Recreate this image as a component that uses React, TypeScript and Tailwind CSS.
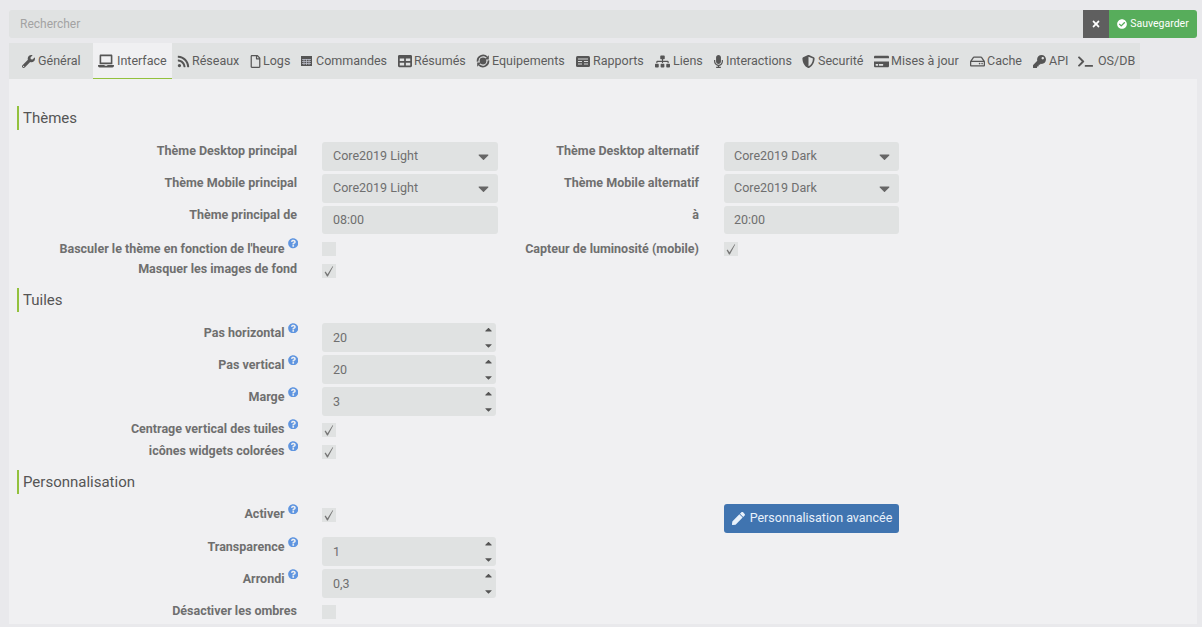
import type { ReactNode } from 'react';
import {
  FaWrench, FaLaptop, FaRss, FaRegFile, FaTable, FaMicrophone, FaShieldAlt, FaCreditCard,
  FaRegHdd, FaKey, FaTerminal, FaSitemap, FaTimes, FaCheckCircle, FaPen, FaQuestionCircle,
  FaCaretDown, FaCaretUp,
} from 'react-icons/fa';

function EquipIcon() {
  return (
    <svg viewBox="0 0 14 14" className="w-[14px] h-[14px] shrink-0 text-[#555]">
      <circle cx="7" cy="7" r="3.4" fill="currentColor" />
      <path d="M1.6 7.6A5.5 5.5 0 0 1 11 3.2" fill="none" stroke="currentColor" strokeWidth="1.7" />
      <path d="M12.4 6.4A5.5 5.5 0 0 1 3 10.8" fill="none" stroke="currentColor" strokeWidth="1.7" />
      <path d="M12.8 1.2V5.4H8.8Z" fill="currentColor" />
      <path d="M1.2 12.8V8.6H5.2Z" fill="currentColor" />
    </svg>
  );
}

function GridIcon() {
  return (
    <svg viewBox="0 0 11 10" className="w-[11px] h-[10px] shrink-0 text-[#555]">
      <rect width="11" height="10" fill="currentColor" />
      <path d="M1 3.5H10M1 5.5H10M1 7.5H10M3 3V9M5.5 3V9M8 3V9" stroke="#c3c5d2" strokeWidth="0.7" fill="none" />
    </svg>
  );
}

function ReportIcon() {
  return (
    <svg viewBox="0 0 14 11" className="w-[14px] h-[11px] shrink-0 text-[#555]">
      <rect width="14" height="11" rx="1.5" fill="currentColor" />
      <path d="M2 3H12M2 5.5H6M2 8H6M8 5.5H12M8 8H12" stroke="#d8dada" strokeWidth="1" fill="none" />
    </svg>
  );
}

const iconCls = 'text-[#555] shrink-0';

const tabs: { label: string; icon: ReactNode; cls: string }[] = [
  { label: 'Général', icon: <FaWrench className={`text-[13px] ${iconCls}`} />, cls: 'w-[84px] pl-[13px] gap-[3px]' },
  { label: 'Interface', icon: <FaLaptop className={`text-[16px] ${iconCls}`} />, cls: 'w-[79px] pl-[5px] gap-[3px]' },
  { label: 'Réseaux', icon: <FaRss className={`text-[13px] ${iconCls}`} />, cls: 'w-[72px] pl-[5px] gap-[2px]' },
  { label: 'Logs', icon: <FaRegFile className={`text-[13px] ${iconCls}`} />, cls: 'w-[52px] pl-[5px] gap-[1px]' },
  { label: 'Commandes', icon: <GridIcon />, cls: 'w-[97px] pl-[5px] gap-[4px]' },
  { label: 'Résumés', icon: <FaTable className={`text-[14px] ${iconCls}`} />, cls: 'w-[78px] pl-[5px] gap-[2px]' },
  { label: 'Equipements', icon: <EquipIcon />, cls: 'w-[100px] pl-[5px] gap-[2px]' },
  { label: 'Rapports', icon: <ReportIcon />, cls: 'w-[79px] pl-[5px] gap-[3px]' },
  { label: 'Liens', icon: <FaSitemap className={`text-[15px] ${iconCls}`} />, cls: 'w-[59px] pl-[5px] gap-[3px]' },
  { label: 'Interactions', icon: <FaMicrophone className={`text-[13px] ${iconCls}`} />, cls: 'w-[88px] pl-[3px] gap-[1px]' },
  { label: 'Securité', icon: <FaShieldAlt className={`text-[13px] ${iconCls}`} />, cls: 'w-[72px] pl-[5px] gap-[3px]' },
  { label: 'Mises à jour', icon: <FaCreditCard className={`text-[15px] ${iconCls}`} />, cls: 'w-[96px] pl-[5px] gap-[2px]' },
  { label: 'Cache', icon: <FaRegHdd className={`text-[15px] ${iconCls}`} />, cls: 'w-[63px] pl-[5px] gap-[2px]' },
  { label: 'API', icon: <FaKey className={`text-[13px] ${iconCls}`} />, cls: 'w-[45px] pl-[5px] gap-[3px]' },
  { label: 'OS/DB', icon: <FaTerminal className={`text-[15px] ${iconCls}`} />, cls: 'w-[61px] pl-[5px] gap-[5px]' },
];

function Help() {
  return <FaQuestionCircle className="ml-[3px] mr-[-1px] text-[10.5px] text-[#5f95e0] -translate-y-[5px] shrink-0" />;
}

function Label({ text, help, w = 'w-[288px]', up = '-translate-y-[4px]' }: { text: string; help?: boolean; w?: string; up?: string }) {
  return (
    <div className={`${w} ${up} shrink-0 flex justify-end items-center text-[12.5px] font-bold text-[#6f6f6f] leading-[14px]`}>
      <span className="whitespace-nowrap">{text}</span>
      {help && <Help />}
    </div>
  );
}

function Select({ value, right }: { value: string; right?: boolean }) {
  return (
    <div className={`${right ? 'w-[175px] pl-[10px]' : 'w-[176px] pl-[11px]'} h-[29px] rounded-[3px] bg-[#e0e2e2] pr-[6px] flex items-center justify-between text-[12.5px] text-[#6f6f6f]`}>
      <span>{value}</span>
      <FaCaretDown className="text-[17px] text-[#666]" />
    </div>
  );
}

function TextBox({ value, right }: { value: string; right?: boolean }) {
  return (
    <div className={`${right ? 'w-[175px] pl-[10px]' : 'w-[176px] pl-[11px]'} h-[28px] rounded-[3px] bg-[#e0e2e2] flex items-center text-[12.5px] text-[#6f6f6f]`}>
      {value}
    </div>
  );
}

function NumberBox({ value }: { value: string }) {
  return (
    <div className="w-[174px] h-[29px] rounded-[3px] bg-[#e0e2e2] pl-[11px] pr-[2px] flex items-center justify-between text-[12.5px] text-[#6f6f6f]">
      <span className="pt-[2px]">{value}</span>
      <div className="flex flex-col gap-[5px] text-[#555]">
        <FaCaretUp className="text-[11px]" />
        <FaCaretDown className="text-[11px]" />
      </div>
    </div>
  );
}

function Check({ on }: { on?: boolean }) {
  return (
    <div className="w-[14px] h-[14px] bg-[#e0e2e2]">
      {on && (
        <svg viewBox="0 0 14 14" className="w-[14px] h-[14px] text-[#777]">
          <path d="M2.6 8.2L5 12.6L5.9 12.6L11.2 2.4L10.6 2.2L5.5 10.2L3.6 7.6Z" fill="currentColor" />
        </svg>
      )}
    </div>
  );
}

function Row({ h, children }: { h: string; children: ReactNode }) {
  return <div className={`flex items-center ${h}`}>{children}</div>;
}

function Control({ children, w, up }: { children: ReactNode; w?: string; up?: string }) {
  return <div className={`ml-[25px] ${w ?? 'w-[177px]'} ${up ?? ''} shrink-0 flex items-center`}>{children}</div>;
}

function Title({ text, className }: { text: string; className: string }) {
  return (
    <div className={`ml-[8px] h-[24px] border-l-2 border-[#93c13e] pl-[4px] text-[15px] leading-[24px] text-[#555] ${className}`}>
      {text}
    </div>
  );
}

export default function App() {
  return (
    <div
      className="w-[1202px] h-[627px] overflow-hidden bg-[#e9e9ec] pt-[10px] pl-[9px]"
      style={{ fontFamily: 'Roboto, "Liberation Sans", sans-serif' }}
    >
      {/* barre de recherche */}
      <div className="flex h-[28px] w-[1188px]">
        <div className="flex-1 bg-[#e0e2e2] rounded-l-[3px] pl-[11px] flex items-center text-[12px] text-[#a3a3a3]">
          Rechercher
        </div>
        <div className="w-[26px] bg-[#5f5f5f] flex items-center justify-center text-white text-[10px]">
          <FaTimes />
        </div>
        <div className="w-[88px] bg-[#57ad5b] rounded-r-[3px] flex items-center justify-center gap-[3px] text-white text-[10.5px]">
          <FaCheckCircle className="text-[10px]" />
          Sauvegarder
        </div>
      </div>

      {/* onglets */}
      <div className="mt-[5px] h-[36px] w-[1131px] bg-[#e0e2e2] flex">
        {tabs.map((t, i) => {
          const active = i === 1;
          return (
            <div
              key={t.label}
              className={`${t.cls} shrink-0 flex items-center text-[12.5px] text-[#5d5d5d] ${active ? 'bg-[#f0f0f2] border-b-[1px] border-[#93c13e] pt-[1px]' : ''}`}
            >
              {t.icon}
              <span className="whitespace-nowrap">{t.label}</span>
            </div>
          );
        })}
      </div>

      {/* contenu */}
      <div className="w-[1188px] h-[545px] bg-[#f0f0f2]">
        <Title text="Thèmes" className="relative top-[27px] mb-[37px]" />
        <Row h="h-[32px]">
          <Label text="Thème Desktop principal" up="-translate-y-[5px]" />
          <Control><Select value="Core2019 Light" /></Control>
          <Label text="Thème Desktop alternatif" w="w-[200px]" up="-translate-y-[5px]" />
          <Control><Select value="Core2019 Dark" right /></Control>
        </Row>
        <Row h="h-[32px]">
          <Label text="Thème Mobile principal" up="-translate-y-[5px]" />
          <Control><Select value="Core2019 Light" /></Control>
          <Label text="Thème Mobile alternatif" w="w-[200px]" up="-translate-y-[5px]" />
          <Control><Select value="Core2019 Dark" right /></Control>
        </Row>
        <Row h="h-[32px]">
          <Label text="Thème principal de" up="-translate-y-[5px]" />
          <Control><TextBox value="08:00" /></Control>
          <Label text="à" w="w-[200px]" up="-translate-y-[5px]" />
          <Control><TextBox value="20:00" right /></Control>
        </Row>
        <Row h="h-[23px] mt-[1px]">
          <Label text="Basculer le thème en fonction de l'heure" help up="" />
          <Control><Check /></Control>
          <Label text="Capteur de luminosité (mobile)" w="w-[200px]" up="" />
          <Control><Check on /></Control>
        </Row>
        <Row h="h-[22px]">
          <Label text="Masquer les images de fond" up="-translate-y-[2px]" />
          <Control><Check on /></Control>
        </Row>

        <Title text="Tuiles" className="mt-[6px] mb-[9px]" />
        <Row h="h-[32px]">
          <Label text="Pas horizontal" help />
          <Control><NumberBox value="20" /></Control>
        </Row>
        <Row h="h-[32px]">
          <Label text="Pas vertical" help />
          <Control><NumberBox value="20" /></Control>
        </Row>
        <Row h="h-[32px]">
          <Label text="Marge" help />
          <Control><NumberBox value="3" /></Control>
        </Row>
        <Row h="h-[22px] mt-[2px]">
          <Label text="Centrage vertical des tuiles" help up="-translate-y-[1px]" />
          <Control><Check on /></Control>
        </Row>
        <Row h="h-[22px]">
          <Label text="icônes widgets colorées" help up="-translate-y-[1px]" />
          <Control><Check on /></Control>
        </Row>

        <Title text="Personnalisation" className="mt-[7px] mb-[8px]" />
        <Row h="h-[32px]">
          <Label text="Activer" help />
          <Control up="-translate-y-[3px]"><Check on /></Control>
          <div className="w-[200px]" />
          <Control>
            <div className="w-[175px] h-[29px] rounded-[3px] bg-[#4074b0] text-[#e8f1fb] text-[12.5px] flex items-center justify-center gap-[5px] pl-[1px]">
              <FaPen className="text-[13px]" />
              Personnalisation avancée
            </div>
          </Control>
        </Row>
        <Row h="h-[32px] mt-[1px]">
          <Label text="Transparence" help />
          <Control><NumberBox value="1" /></Control>
        </Row>
        <Row h="h-[32px]">
          <Label text="Arrondi" help />
          <Control><NumberBox value="0,3" /></Control>
        </Row>
        <Row h="h-[22px] mt-[2px]">
          <Label text="Désactiver les ombres" up="-translate-y-[1px]" />
          <Control><Check /></Control>
        </Row>
      </div>
    </div>
  );
}
